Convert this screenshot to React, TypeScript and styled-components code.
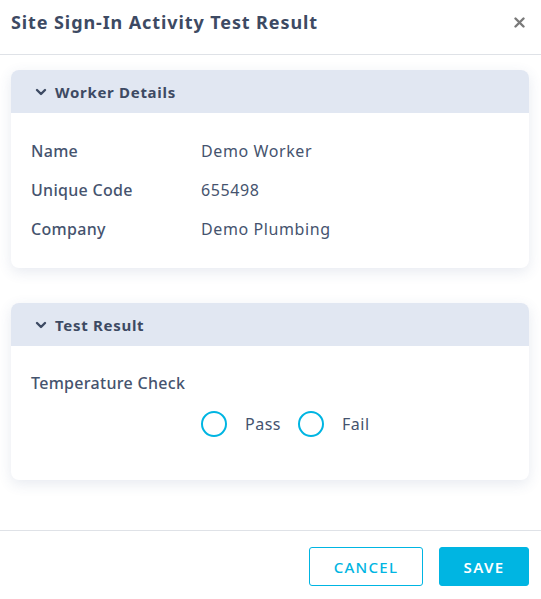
import React from "react";
import styled, { createGlobalStyle } from "styled-components";

const Global = createGlobalStyle`
  html, body { margin: 0; padding: 0; background: #fff; }
  body { font-family: "Noto Sans", "Open Sans", sans-serif; color: #3b4a66; }
  * { box-sizing: border-box; }
`;

const Modal = styled.div`
  width: 541px;
  height: 599px;
  display: flex;
  flex-direction: column;
  background: #fff;
`;

const Header = styled.div`
  height: 55px;
  display: flex;
  align-items: center;
  justify-content: space-between;
  padding: 0 16px 10px 11px;
  border-bottom: 1px solid #dfe2e7;
`;

const Title = styled.h1`
  margin: 0;
  font-size: 18px;
  font-weight: 700;
  color: #3d4a63;
  letter-spacing: 0.9px;
`;

const Close = styled.button`
  border: none;
  background: none;
  padding: 0;
  color: #7a7a7a;
  display: flex;
  cursor: pointer;
`;

const Body = styled.div`
  flex: 1;
  padding: 15px 12px 0 11px;
  display: flex;
  flex-direction: column;
  gap: 35px;
`;

const Card = styled.section<{ $h: number }>`
  height: ${(p) => p.$h}px;
  border-radius: 8px;
  background: #fff;
  overflow: hidden;
  box-shadow: 0 4px 14px rgba(60, 80, 130, 0.12);
`;

const CardHead = styled.div`
  height: 43px;
  background: #e1e7f2;
  display: flex;
  align-items: center;
  gap: 8px;
  padding-left: 24px;
  font-size: 15px;
  font-weight: 700;
  color: #3d4a63;
  letter-spacing: 0.7px;
`;

const Rows = styled.div`
  padding: 28px 20px 0 20px;
  display: grid;
  grid-template-columns: 170px 1fr;
  row-gap: 19px;
`;

const Label = styled.div`
  font-size: 16px;
  font-weight: 500;
  color: #45536e;
  line-height: 20px;
  letter-spacing: 0.3px;
`;

const Value = styled.div`
  font-size: 16px;
  color: #45536e;
  line-height: 20px;
  letter-spacing: 0.6px;
`;

const TestBody = styled.div`
  padding: 27px 20px 0 20px;
`;

const Options = styled.div`
  display: flex;
  align-items: center;
  padding-left: 170px;
  margin-top: 18px;
  gap: 17px;
`;

const Option = styled.label`
  display: flex;
  align-items: center;
  gap: 18px;
  font-size: 16px;
  letter-spacing: 0.5px;
  color: #45536e;
`;

const Radio = styled.span`
  width: 26px;
  height: 26px;
  border-radius: 50%;
  border: 2px solid #00b5e2;
`;

const Footer = styled.div`
  height: 69px;
  border-top: 1px solid #dfe2e7;
  display: flex;
  justify-content: flex-end;
  align-items: flex-start;
  padding: 16px 12px 0 0;
  gap: 16px;
`;

const Button = styled.button<{ $primary?: boolean }>`
  height: 39px;
  width: ${(p) => (p.$primary ? "90px" : "114px")};
  border-radius: 3px;
  border: 1px solid #00b5e2;
  background: ${(p) => (p.$primary ? "#00b5e2" : "#fff")};
  color: ${(p) => (p.$primary ? "#fff" : "#00b5e2")};
  font-family: inherit;
  font-size: 15px;
  letter-spacing: 1.3px;
  font-weight: ${(p) => (p.$primary ? 600 : 500)};
  cursor: pointer;
`;

const Chevron = () => (
  <svg width="12" height="12" viewBox="0 0 12 12">
    <path d="M2 4l4 4 4-4" fill="none" stroke="#3d4a63" strokeWidth="2.4" strokeLinecap="round" strokeLinejoin="round" />
  </svg>
);

export default function App() {
  return (
    <>
      <Global />
      <Modal>
        <Header>
          <Title>Site Sign-In Activity Test Result</Title>
          <Close aria-label="close">
            <svg width="11" height="11" viewBox="0 0 11 11">
              <path d="M1.5 1.5l8 8M9.5 1.5l-8 8" stroke="#7a7a7a" strokeWidth="2.4" strokeLinecap="round" />
            </svg>
          </Close>
        </Header>
        <Body>
          <Card $h={198}>
            <CardHead>
              <Chevron />
              Worker Details
            </CardHead>
            <Rows>
              <Label>Name</Label>
              <Value>Demo Worker</Value>
              <Label>Unique Code</Label>
              <Value>655498</Value>
              <Label>Company</Label>
              <Value>Demo Plumbing</Value>
            </Rows>
          </Card>
          <Card $h={177}>
            <CardHead>
              <Chevron />
              Test Result
            </CardHead>
            <TestBody>
              <Label>Temperature Check</Label>
              <Options>
                <Option>
                  <Radio />
                  Pass
                </Option>
                <Option>
                  <Radio />
                  Fail
                </Option>
              </Options>
            </TestBody>
          </Card>
        </Body>
        <Footer>
          <Button>CANCEL</Button>
          <Button $primary>SAVE</Button>
        </Footer>
      </Modal>
    </>
  );
}
